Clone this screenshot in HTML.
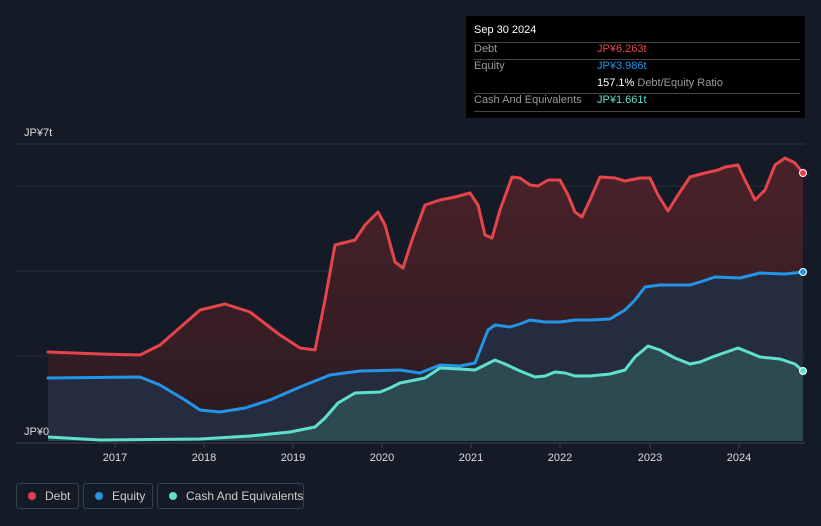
<!DOCTYPE html><html><head><style>
html,body{margin:0;width:821px;height:526px;overflow:hidden;background:#151b26;font-family:"Liberation Sans",sans-serif;}
.tt{position:absolute;left:466px;top:16px;width:339px;height:102px;background:#000;color:#fff;font-size:11px}
.tt div{position:absolute;white-space:nowrap}
.ln{left:8px;width:326px;height:1px;background:#444}
.g{color:#999}
.lg{position:absolute;top:483px;height:26px;border:1px solid #3a404a;border-radius:3px;color:#ccc;font-size:12px;line-height:24px;box-sizing:border-box;white-space:nowrap}
.lg i{position:absolute;left:11px;top:8px;width:8px;height:8px;border-radius:50%}
</style></head><body>
<svg width="821" height="526" style="position:absolute;left:0;top:0">
<defs>
<linearGradient id="dg" x1="0" y1="0" x2="0" y2="1"><stop offset="0" stop-color="#4a2228"/><stop offset="1" stop-color="#2a1b22"/></linearGradient>
</defs>
<line x1="16" y1="144" x2="805" y2="144" stroke="#2e3440"/>
<line x1="16" y1="186" x2="805" y2="186" stroke="#262c38"/>
<line x1="16" y1="271" x2="805" y2="271" stroke="#262c38"/>
<line x1="16" y1="356" x2="805" y2="356" stroke="#262c38"/>
<polygon fill="url(#dg)" points="48,441 48,352 100,354 140,355 160,345 200,310 225,304 250,312 280,335 300,348 315,350 325,300 335,245 355,240 365,225 378,212 385,225 395,262 403,268 412,240 425,205 440,200 455,197 470,193 478,205 485,235 492,238 500,210 512,177 520,178 530,185 538,186 548,180 560,180 568,195 575,212 582,217 590,200 600,177 615,178 625,181 640,178 650,178 658,195 668,211 678,195 690,177 705,173 718,170 725,167 738,165 745,180 755,200 765,190 775,165 785,158 795,163 803,173 803,441"/>
<polygon fill="#262c40" points="48,441 48,378 140,377 160,385 185,400 200,410 220,412 245,408 270,400 300,387 330,375 360,371 400,370 420,373 440,365 460,366 475,363 488,330 495,325 510,327 520,324 530,320 545,322 560,322 575,320 590,320 610,319 625,310 635,300 645,287 660,285 690,285 700,282 715,277 740,278 760,273 785,274 803,272 803,441"/>
<polygon fill="#2c4a50" points="48,441 48,437 100,440 200,439 250,436 290,432 315,427 325,418 338,403 355,393 380,392 390,388 400,383 415,380 425,378 440,368 460,369 475,370 485,365 495,360 505,364 520,371 535,377 545,376 555,372 565,373 575,376 590,376 610,374 625,370 635,357 648,346 660,350 675,358 690,364 700,362 715,356 738,348 748,352 760,357 780,359 795,364 803,371 803,441"/>
<g fill="none" stroke-width="3" stroke-linejoin="round" stroke-linecap="round">
<polyline stroke="#e5454a" points="48,352 100,354 140,355 160,345 200,310 225,304 250,312 280,335 300,348 315,350 325,300 335,245 355,240 365,225 378,212 385,225 395,262 403,268 412,240 425,205 440,200 455,197 470,193 478,205 485,235 492,238 500,210 512,177 520,178 530,185 538,186 548,180 560,180 568,195 575,212 582,217 590,200 600,177 615,178 625,181 640,178 650,178 658,195 668,211 678,195 690,177 705,173 718,170 725,167 738,165 745,180 755,200 765,190 775,165 785,158 795,163 803,173"/>
<polyline stroke="#2394e6" points="48,378 140,377 160,385 185,400 200,410 220,412 245,408 270,400 300,387 330,375 360,371 400,370 420,373 440,365 460,366 475,363 488,330 495,325 510,327 520,324 530,320 545,322 560,322 575,320 590,320 610,319 625,310 635,300 645,287 660,285 690,285 700,282 715,277 740,278 760,273 785,274 803,272"/>
<polyline stroke="#5fdfcc" points="48,437 100,440 200,439 250,436 290,432 315,427 325,418 338,403 355,393 380,392 390,388 400,383 415,380 425,378 440,368 460,369 475,370 485,365 495,360 505,364 520,371 535,377 545,376 555,372 565,373 575,376 590,376 610,374 625,370 635,357 648,346 660,350 675,358 690,364 700,362 715,356 738,348 748,352 760,357 780,359 795,364 803,371"/>
</g>
<circle cx="803" cy="173" r="3.5" fill="#e5454a" stroke="#fff" stroke-width="1"/>
<circle cx="803" cy="272" r="3.5" fill="#2394e6" stroke="#fff" stroke-width="1"/>
<circle cx="803" cy="371" r="3.5" fill="#5fdfcc" stroke="#fff" stroke-width="1"/>
<line x1="16" y1="443" x2="805" y2="443" stroke="#3a404a"/>
<g stroke="#3a404a"><line x1="115" y1="443" x2="115" y2="448"/><line x1="204" y1="443" x2="204" y2="448"/><line x1="293" y1="443" x2="293" y2="448"/><line x1="382" y1="443" x2="382" y2="448"/><line x1="471" y1="443" x2="471" y2="448"/><line x1="560" y1="443" x2="560" y2="448"/><line x1="650" y1="443" x2="650" y2="448"/><line x1="739" y1="443" x2="739" y2="448"/></g>
<g fill="#ddd" font-size="11" text-anchor="middle" font-family="Liberation Sans,sans-serif">
<text x="115" y="461">2017</text><text x="204" y="461">2018</text><text x="293" y="461">2019</text><text x="382" y="461">2020</text><text x="471" y="461">2021</text><text x="560" y="461">2022</text><text x="650" y="461">2023</text><text x="739" y="461">2024</text>
</g>
<text x="24" y="136" fill="#ddd" font-size="11" font-family="Liberation Sans,sans-serif">JP¥7t</text>
<rect x="16" y="424" width="32" height="15" fill="#151b26"/>
<text x="24" y="435" fill="#ddd" font-size="11" font-family="Liberation Sans,sans-serif">JP¥0</text>
</svg>
<div class="tt">
<div style="left:8px;top:8px;font-size:11px">Sep 30 2024</div>
<div class="ln" style="top:26px"></div>
<div class="g" style="left:8px;top:27px">Debt</div><div style="left:131px;top:27px;color:#e5454a">JP¥6.263t</div>
<div class="ln" style="top:43px"></div>
<div class="g" style="left:8px;top:44px">Equity</div><div style="left:131px;top:44px;color:#2394e6">JP¥3.986t</div>
<div style="left:131px;top:61px">157.1% <span class="g">Debt/Equity Ratio</span></div>
<div class="ln" style="top:77px"></div>
<div class="g" style="left:8px;top:78px">Cash And Equivalents</div><div style="left:131px;top:78px;color:#5fdfcc">JP¥1.661t</div>
<div class="ln" style="top:95px"></div>
</div>
<div class="lg" style="left:16px;width:63px"><i style="background:#e5454a"></i><span style="margin-left:28px">Debt</span></div>
<div class="lg" style="left:83px;width:70px"><i style="background:#2394e6"></i><span style="margin-left:28px">Equity</span></div>
<div class="lg" style="left:157px;width:147px"><i style="background:#5fdfcc"></i><span style="margin-left:28px">Cash And Equivalents</span></div>
</body></html>
